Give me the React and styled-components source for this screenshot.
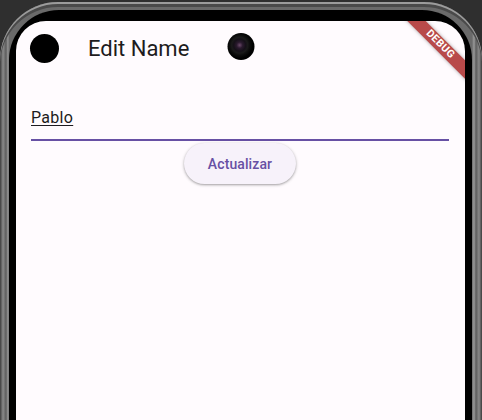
import React from "react"
import styled, { createGlobalStyle } from "styled-components"

const GlobalStyle = createGlobalStyle`
  html, body {
    margin: 0;
    padding: 0;
    height: 420px;
    overflow: hidden;
    background: #2f2f2f;
    font-family: Roboto, "Noto Sans", sans-serif;
  }
`

const Frame = styled.div`
  margin-top: 2px;
  padding: 8px 10px 0 9px;
  border-radius: 58px 58px 0 0;
  background: linear-gradient(90deg, #3c3c3c 0px, #8a8a8a 3px, #5c5c5c 6px, #9a9a9a 8px, #6a6a6a 9px, #6a6a6a calc(100% - 10px), #9a9a9a calc(100% - 8px), #5c5c5c calc(100% - 6px), #8a8a8a calc(100% - 3px), #3c3c3c 100%);
  box-shadow: inset 0 2px 0 #9c9c9c, inset 0 5px 0 #4a4a4a;
`

const Bezel = styled.div`
  padding: 11px 7px 0 7px;
  border-radius: 50px 50px 0 0;
  background: #000;
`

const Screen = styled.div`
  position: relative;
  height: 420px;
  overflow: hidden;
  border-radius: 30px 30px 0 0;
  background: #fffbfe;
`

const AppBar = styled.div`
  display: flex;
  align-items: center;
  height: 54px;
`

const Leading = styled.div`
  display: flex;
  justify-content: center;
  align-items: center;
  width: 56px;
`

const Dot = styled.div`
  width: 29px;
  height: 29px;
  border-radius: 50%;
  background: #000;
`

const Title = styled.h1`
  margin: 0 0 0 16px;
  font-size: 22px;
  font-weight: 400;
  color: #1d1b20;
`

const Camera = styled.div`
  position: absolute;
  top: 12px;
  left: 50%;
  transform: translateX(-50%);
  width: 27px;
  height: 27px;
  border-radius: 50%;
  background: radial-gradient(circle at 45% 45%, #6b4a6a 0px, #2a1a2e 3px, #151018 6px, #1a1a1a 8px, #0d0d0d 10px, #000 13px);
`

const Ribbon = styled.div`
  position: absolute;
  top: 17px;
  left: 364px;
  width: 120px;
  height: 13px;
  display: flex;
  justify-content: center;
  align-items: center;
  transform: rotate(45deg);
  background: #b84a4a;
  box-shadow: 0 0 4px rgba(0, 0, 0, 0.35);
  color: #fff;
  font-size: 10.5px;
  font-weight: 700;
  letter-spacing: 0.4px;
  line-height: 1;
`

const Body = styled.div`
  display: flex;
  flex-direction: column;
  align-items: center;
  padding: 0 16px 0 15px;
`

const Field = styled.div`
  align-self: stretch;
  margin-top: 31px;
  padding-bottom: 9px;
  border-bottom: 2px solid #6750a4;
`

const Value = styled.span`
  font-size: 16px;
  line-height: 24px;
  color: #1d1b20;
  text-decoration: underline;
  text-underline-offset: 2px;
  letter-spacing: 0.3px;
`

const Button = styled.button`
  margin-top: 2px;
  height: 41px;
  padding: 0 24px;
  border: none;
  border-radius: 21px;
  background: #f7f2fa;
  box-shadow: 0 1px 2px rgba(0, 0, 0, 0.25), 0 1px 3px 1px rgba(0, 0, 0, 0.1);
  color: #6750a4;
  font-family: Roboto, sans-serif;
  font-size: 14px;
  font-weight: 500;
  letter-spacing: 0.1px;
`

const App = () => {
  return (
    <>
      <GlobalStyle />
      <Frame>
        <Bezel>
          <Screen>
            <AppBar>
              <Leading>
                <Dot />
              </Leading>
              <Title>Edit Name</Title>
            </AppBar>
            <Body>
              <Field>
                <Value>Pablo</Value>
              </Field>
              <Button>Actualizar</Button>
            </Body>
            <Camera />
            <Ribbon>DEBUG</Ribbon>
          </Screen>
        </Bezel>
      </Frame>
    </>
  )
}

export default App
